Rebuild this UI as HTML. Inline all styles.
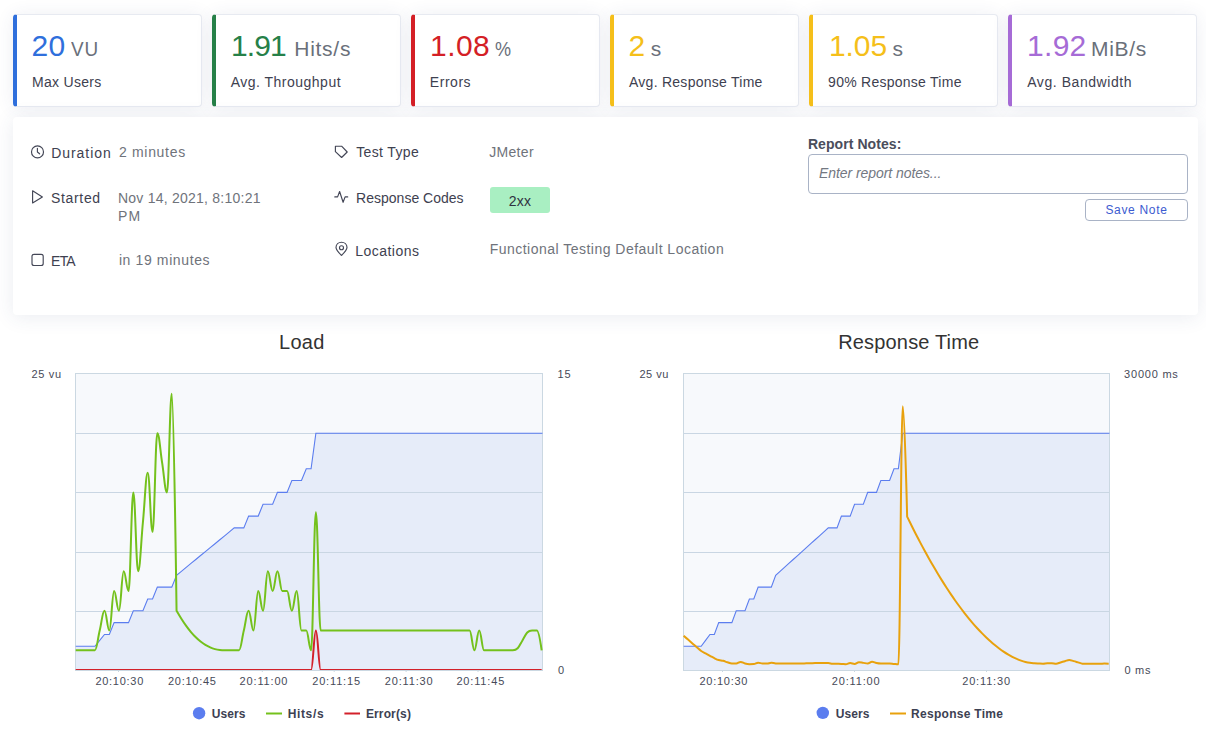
<!DOCTYPE html>
<html><head><meta charset="utf-8">
<style>
html,body{margin:0;padding:0;background:#fff;}
body{width:1206px;height:735px;overflow:hidden;position:relative;font-family:"Liberation Sans",sans-serif;}
.card{position:absolute;top:14px;height:93px;width:188.5px;box-sizing:border-box;background:#fff;border:1px solid #e7eaf1;border-left:4px solid #2f6fdc;border-radius:4px;box-shadow:0 1px 18px rgba(50,70,120,0.09);}
.t{position:absolute;white-space:nowrap;line-height:1;}
.val{font-size:30px;}
.unit{font-size:21px;color:#6a707a;letter-spacing:-1px;}
.lbl{font-size:14px;color:#3e4150;}
.panel{position:absolute;left:13px;top:117px;width:1185px;height:198px;background:#fff;border-radius:4px;box-shadow:0 2px 20px rgba(50,70,120,0.1);}
.dl{font-size:14px;color:#3e4150;}
.dv{font-size:14px;color:#6f737b;}
.ic{position:absolute;left:0;top:0;}
</style></head><body>
<!-- stat cards -->
<div class="card" style="left:13px;border-left-color:#2f6fdc"></div>
<div class="card" style="left:212px;border-left-color:#268048"></div>
<div class="card" style="left:411px;border-left-color:#d41f26"></div>
<div class="card" style="left:610px;border-left-color:#f5bf1a"></div>
<div class="card" style="left:809px;border-left-color:#f5bf1a"></div>
<div class="card" style="left:1008px;border-left-color:#a66bd6"></div>

<!-- details panel -->
<div class="panel"></div>
<svg class="ic" width="400" height="320" style="position:absolute;left:0;top:0" fill="none" stroke="#434656" stroke-width="1.15" stroke-linecap="round" stroke-linejoin="round">
  <circle cx="37.5" cy="151.9" r="6"/>
  <path d="M37.4 148.3 V152 L39.6 153.8"/>
  <path d="M32.6 190.8 L42.4 196.9 L32.6 203 Z"/>
  <rect x="32" y="254.3" width="11.2" height="11.2" rx="2"/>
  <path d="M335.4 146.2 H341.6 L347.2 152 L341.6 157.5 L335.4 151.7 Z"/>
  <path d="M334.8 196.9 H337.6 L339.6 191.5 L343.1 202.3 L345.1 196.9 H347.7"/>
  <path d="M341.5 255.4 C338.5 252.5 336 250 336 247.5 C336 244.2 338.5 242.2 341.5 242.2 C344.5 242.2 347 244.2 347 247.5 C347 250 344.5 252.5 341.5 255.4 Z"/>
  <circle cx="341.5" cy="247.7" r="2"/>
</svg>

<div style="position:absolute;left:490px;top:187px;width:60px;height:26px;background:#a9efc2;border-radius:3px;"></div>

<div style="position:absolute;left:808px;top:154px;width:380px;height:40px;box-sizing:border-box;border:1px solid #a9b3c6;border-radius:4px;background:#fff"></div>
<div style="position:absolute;left:1085px;top:199px;width:103px;height:22px;box-sizing:border-box;border:1px solid #a9b3c6;border-radius:4px;background:#fff"></div>

<svg width="1206" height="420" viewBox="0 315 1206 420" style="position:absolute;left:0;top:315px">
<rect x="75.5" y="373.5" width="467" height="297.0" fill="#f7f9fc"/>
<line x1="75.5" y1="433.50" x2="542.5" y2="433.50" stroke="#c9d6e3" stroke-width="1"/><line x1="75.5" y1="492.50" x2="542.5" y2="492.50" stroke="#c9d6e3" stroke-width="1"/><line x1="75.5" y1="552.50" x2="542.5" y2="552.50" stroke="#c9d6e3" stroke-width="1"/><line x1="75.5" y1="611.50" x2="542.5" y2="611.50" stroke="#c9d6e3" stroke-width="1"/>
<path d="M 75.68 646.32 L 80.48 646.32 L 85.29 646.32 L 90.09 646.32 L 94.90 646.32 L 99.70 640.40 L 104.50 634.48 L 109.31 634.48 L 114.11 622.64 L 118.92 622.64 L 123.72 622.64 L 128.52 622.64 L 133.33 610.80 L 138.13 610.80 L 142.94 610.80 L 147.74 598.96 L 152.54 598.96 L 157.35 587.12 L 162.15 587.12 L 166.96 587.12 L 171.76 587.12 L 176.56 575.28 L 181.37 571.33 L 186.17 567.39 L 190.98 563.44 L 195.78 559.49 L 200.58 555.55 L 205.39 551.60 L 210.19 547.65 L 215.00 543.71 L 219.80 539.76 L 224.60 535.81 L 229.41 531.87 L 234.21 527.92 L 239.02 527.92 L 243.82 527.92 L 248.62 516.08 L 253.43 516.08 L 258.23 516.08 L 263.04 504.24 L 267.84 504.24 L 272.64 504.24 L 277.45 492.40 L 282.25 492.40 L 287.06 492.40 L 291.86 480.56 L 296.66 480.56 L 301.47 480.56 L 306.27 468.72 L 311.08 468.72 L 315.88 433.20 L 320.68 433.20 L 325.49 433.20 L 330.29 433.20 L 335.10 433.20 L 339.90 433.20 L 344.70 433.20 L 349.51 433.20 L 354.31 433.20 L 359.12 433.20 L 363.92 433.20 L 368.72 433.20 L 373.53 433.20 L 378.33 433.20 L 383.14 433.20 L 387.94 433.20 L 392.74 433.20 L 397.55 433.20 L 402.35 433.20 L 407.16 433.20 L 411.96 433.20 L 416.76 433.20 L 421.57 433.20 L 426.37 433.20 L 431.18 433.20 L 435.98 433.20 L 440.78 433.20 L 445.59 433.20 L 450.39 433.20 L 455.20 433.20 L 460.00 433.20 L 464.80 433.20 L 469.61 433.20 L 474.41 433.20 L 479.22 433.20 L 484.02 433.20 L 488.82 433.20 L 493.63 433.20 L 498.43 433.20 L 503.24 433.20 L 508.04 433.20 L 512.84 433.20 L 517.65 433.20 L 522.45 433.20 L 527.26 433.20 L 532.06 433.20 L 536.86 433.20 L 542.50 433.20 L 542.50 670.00 L 75.68 670.00 Z" fill="#e6ecf9"/>
<line x1="75.5" y1="433.50" x2="542.5" y2="433.50" stroke="#c9d6e3" stroke-width="1"/><line x1="75.5" y1="492.50" x2="542.5" y2="492.50" stroke="#c9d6e3" stroke-width="1"/><line x1="75.5" y1="552.50" x2="542.5" y2="552.50" stroke="#c9d6e3" stroke-width="1"/><line x1="75.5" y1="611.50" x2="542.5" y2="611.50" stroke="#c9d6e3" stroke-width="1"/>
<rect x="75.5" y="373.5" width="467" height="297.0" fill="none" stroke="#cbd8e2" stroke-width="1"/>
<defs><clipPath id="cl"><rect x="75" y="373" width="468" height="297"/></clipPath><clipPath id="cr"><rect x="683" y="373" width="427" height="297"/></clipPath></defs>
<g clip-path="url(#cl)">
<path d="M 75.68 646.32 L 80.48 646.32 L 85.29 646.32 L 90.09 646.32 L 94.90 646.32 L 99.70 640.40 L 104.50 634.48 L 109.31 634.48 L 114.11 622.64 L 118.92 622.64 L 123.72 622.64 L 128.52 622.64 L 133.33 610.80 L 138.13 610.80 L 142.94 610.80 L 147.74 598.96 L 152.54 598.96 L 157.35 587.12 L 162.15 587.12 L 166.96 587.12 L 171.76 587.12 L 176.56 575.28 L 181.37 571.33 L 186.17 567.39 L 190.98 563.44 L 195.78 559.49 L 200.58 555.55 L 205.39 551.60 L 210.19 547.65 L 215.00 543.71 L 219.80 539.76 L 224.60 535.81 L 229.41 531.87 L 234.21 527.92 L 239.02 527.92 L 243.82 527.92 L 248.62 516.08 L 253.43 516.08 L 258.23 516.08 L 263.04 504.24 L 267.84 504.24 L 272.64 504.24 L 277.45 492.40 L 282.25 492.40 L 287.06 492.40 L 291.86 480.56 L 296.66 480.56 L 301.47 480.56 L 306.27 468.72 L 311.08 468.72 L 315.88 433.20 L 320.68 433.20 L 325.49 433.20 L 330.29 433.20 L 335.10 433.20 L 339.90 433.20 L 344.70 433.20 L 349.51 433.20 L 354.31 433.20 L 359.12 433.20 L 363.92 433.20 L 368.72 433.20 L 373.53 433.20 L 378.33 433.20 L 383.14 433.20 L 387.94 433.20 L 392.74 433.20 L 397.55 433.20 L 402.35 433.20 L 407.16 433.20 L 411.96 433.20 L 416.76 433.20 L 421.57 433.20 L 426.37 433.20 L 431.18 433.20 L 435.98 433.20 L 440.78 433.20 L 445.59 433.20 L 450.39 433.20 L 455.20 433.20 L 460.00 433.20 L 464.80 433.20 L 469.61 433.20 L 474.41 433.20 L 479.22 433.20 L 484.02 433.20 L 488.82 433.20 L 493.63 433.20 L 498.43 433.20 L 503.24 433.20 L 508.04 433.20 L 512.84 433.20 L 517.65 433.20 L 522.45 433.20 L 527.26 433.20 L 532.06 433.20 L 536.86 433.20 L 542.50 433.20" fill="none" stroke="#5b7def" stroke-width="1.1"/>
<path d="M 75.68 670.00 C 75.68 670.00 78.56 670.00 80.48 670.00 C 82.41 670.00 83.37 670.00 85.29 670.00 C 87.21 670.00 88.17 670.00 90.09 670.00 C 92.01 670.00 92.97 670.00 94.90 670.00 C 96.82 670.00 97.78 670.00 99.70 670.00 C 101.62 670.00 102.58 670.00 104.50 670.00 C 106.43 670.00 107.39 670.00 109.31 670.00 C 111.23 670.00 112.19 670.00 114.11 670.00 C 116.03 670.00 116.99 670.00 118.92 670.00 C 120.84 670.00 121.80 670.00 123.72 670.00 C 125.64 670.00 126.60 670.00 128.52 670.00 C 130.45 670.00 131.41 670.00 133.33 670.00 C 135.25 670.00 136.21 670.00 138.13 670.00 C 140.05 670.00 141.01 670.00 142.94 670.00 C 144.86 670.00 145.82 670.00 147.74 670.00 C 149.66 670.00 150.62 670.00 152.54 670.00 C 154.47 670.00 155.43 670.00 157.35 670.00 C 159.27 670.00 160.23 670.00 162.15 670.00 C 164.07 670.00 165.03 670.00 166.96 670.00 C 168.88 670.00 169.84 670.00 171.76 670.00 C 173.68 670.00 174.64 670.00 176.56 670.00 C 178.49 670.00 179.45 670.00 181.37 670.00 C 183.29 670.00 184.25 670.00 186.17 670.00 C 188.09 670.00 189.05 670.00 190.98 670.00 C 192.90 670.00 193.86 670.00 195.78 670.00 C 197.70 670.00 198.66 670.00 200.58 670.00 C 202.51 670.00 203.47 670.00 205.39 670.00 C 207.31 670.00 208.27 670.00 210.19 670.00 C 212.11 670.00 213.07 670.00 215.00 670.00 C 216.92 670.00 217.88 670.00 219.80 670.00 C 221.72 670.00 222.68 670.00 224.60 670.00 C 226.53 670.00 227.49 670.00 229.41 670.00 C 231.33 670.00 232.29 670.00 234.21 670.00 C 236.13 670.00 237.09 670.00 239.02 670.00 C 240.94 670.00 241.90 670.00 243.82 670.00 C 245.74 670.00 246.70 670.00 248.62 670.00 C 250.55 670.00 251.51 670.00 253.43 670.00 C 255.35 670.00 256.31 670.00 258.23 670.00 C 260.15 670.00 261.11 670.00 263.04 670.00 C 264.96 670.00 265.92 670.00 267.84 670.00 C 269.76 670.00 270.72 670.00 272.64 670.00 C 274.57 670.00 275.53 670.00 277.45 670.00 C 279.37 670.00 280.33 670.00 282.25 670.00 C 284.17 670.00 285.13 670.00 287.06 670.00 C 288.98 670.00 289.94 670.00 291.86 670.00 C 293.78 670.00 294.74 670.00 296.66 670.00 C 298.59 670.00 299.55 670.00 301.47 670.00 C 303.39 670.00 304.35 670.00 306.27 670.00 C 308.19 670.00 309.15 670.00 311.08 670.00 C 313.00 670.00 313.96 630.53 315.88 630.53 C 317.80 630.53 318.76 670.00 320.68 670.00 C 322.61 670.00 323.57 670.00 325.49 670.00 C 327.41 670.00 328.37 670.00 330.29 670.00 C 332.21 670.00 333.17 670.00 335.10 670.00 C 337.02 670.00 337.98 670.00 339.90 670.00 C 341.82 670.00 342.78 670.00 344.70 670.00 C 346.63 670.00 347.59 670.00 349.51 670.00 C 351.43 670.00 352.39 670.00 354.31 670.00 C 356.23 670.00 357.19 670.00 359.12 670.00 C 361.04 670.00 362.00 670.00 363.92 670.00 C 365.84 670.00 366.80 670.00 368.72 670.00 C 370.65 670.00 371.61 670.00 373.53 670.00 C 375.45 670.00 376.41 670.00 378.33 670.00 C 380.25 670.00 381.21 670.00 383.14 670.00 C 385.06 670.00 386.02 670.00 387.94 670.00 C 389.86 670.00 390.82 670.00 392.74 670.00 C 394.67 670.00 395.63 670.00 397.55 670.00 C 399.47 670.00 400.43 670.00 402.35 670.00 C 404.27 670.00 405.23 670.00 407.16 670.00 C 409.08 670.00 410.04 670.00 411.96 670.00 C 413.88 670.00 414.84 670.00 416.76 670.00 C 418.69 670.00 419.65 670.00 421.57 670.00 C 423.49 670.00 424.45 670.00 426.37 670.00 C 428.29 670.00 429.25 670.00 431.18 670.00 C 433.10 670.00 434.06 670.00 435.98 670.00 C 437.90 670.00 438.86 670.00 440.78 670.00 C 442.71 670.00 443.67 670.00 445.59 670.00 C 447.51 670.00 448.47 670.00 450.39 670.00 C 452.31 670.00 453.27 670.00 455.20 670.00 C 457.12 670.00 458.08 670.00 460.00 670.00 C 461.92 670.00 462.88 670.00 464.80 670.00 C 466.73 670.00 467.69 670.00 469.61 670.00 C 471.53 670.00 472.49 670.00 474.41 670.00 C 476.33 670.00 477.29 670.00 479.22 670.00 C 481.14 670.00 482.10 670.00 484.02 670.00 C 485.94 670.00 486.90 670.00 488.82 670.00 C 490.75 670.00 491.71 670.00 493.63 670.00 C 495.55 670.00 496.51 670.00 498.43 670.00 C 500.35 670.00 501.31 670.00 503.24 670.00 C 505.16 670.00 506.12 670.00 508.04 670.00 C 509.96 670.00 510.92 670.00 512.84 670.00 C 514.77 670.00 515.73 670.00 517.65 670.00 C 519.57 670.00 520.53 670.00 522.45 670.00 C 524.37 670.00 525.33 670.00 527.26 670.00 C 529.18 670.00 530.14 670.00 532.06 670.00 C 533.98 670.00 534.94 670.00 536.86 670.00 C 538.79 670.00 541.67 670.00 541.67 670.00" fill="none" stroke="#d3202a" stroke-width="2"/>
<path d="M 75.68 650.27 C 75.68 650.27 78.56 650.27 80.48 650.27 C 82.41 650.27 83.37 650.27 85.29 650.27 C 87.21 650.27 88.17 650.27 90.09 650.27 C 92.01 650.27 92.97 650.27 94.90 650.27 C 96.82 650.27 97.78 638.43 99.70 630.53 C 101.62 622.64 102.58 610.80 104.50 610.80 C 106.43 610.80 107.39 630.53 109.31 630.53 C 111.23 630.53 112.19 591.07 114.11 591.07 C 116.03 591.07 116.99 610.80 118.92 610.80 C 120.84 610.80 121.80 571.33 123.72 571.33 C 125.64 571.33 126.60 591.07 128.52 591.07 C 130.45 591.07 131.41 492.40 133.33 492.40 C 135.25 492.40 136.21 571.33 138.13 571.33 C 140.05 571.33 141.01 541.73 142.94 522.00 C 144.86 502.27 145.82 472.67 147.74 472.67 C 149.66 472.67 150.62 531.87 152.54 531.87 C 154.47 531.87 155.43 433.20 157.35 433.20 C 159.27 433.20 160.23 450.96 162.15 462.80 C 164.07 474.64 165.03 492.40 166.96 492.40 C 168.88 492.40 169.84 393.73 171.76 393.73 C 173.68 393.73 176.56 610.80 176.56 610.80 L 176.56 610.80 C 176.56 610.80 179.45 615.73 181.37 618.75 C 183.29 621.78 184.25 623.26 186.17 625.93 C 188.09 628.60 189.05 629.84 190.98 632.11 C 192.90 634.39 193.86 635.43 195.78 637.32 C 197.70 639.22 198.66 640.06 200.58 641.59 C 202.51 643.11 203.47 643.77 205.39 644.94 C 207.31 646.11 208.27 646.60 210.19 647.43 C 212.11 648.26 213.07 648.58 215.00 649.10 C 216.92 649.61 217.88 649.77 219.80 650.01 C 221.72 650.24 222.68 650.27 224.60 650.27 C 226.53 650.27 227.49 650.27 229.41 650.27 C 231.33 650.27 232.29 650.27 234.21 650.27 C 236.13 650.27 237.09 650.27 239.02 650.27 C 240.94 650.27 241.90 638.43 243.82 630.53 C 245.74 622.64 246.70 610.80 248.62 610.80 C 250.55 610.80 251.51 630.53 253.43 630.53 C 255.35 630.53 256.31 591.07 258.23 591.07 C 260.15 591.07 261.11 610.80 263.04 610.80 C 264.96 610.80 265.92 571.33 267.84 571.33 C 269.76 571.33 270.72 591.07 272.64 591.07 C 274.57 591.07 275.53 571.33 277.45 571.33 C 279.37 571.33 280.33 591.07 282.25 591.07 C 284.17 591.07 285.13 591.07 287.06 591.07 C 288.98 591.07 289.94 610.80 291.86 610.80 C 293.78 610.80 294.74 591.07 296.66 591.07 C 298.59 591.07 299.55 630.53 301.47 630.53 C 303.39 630.53 304.35 630.53 306.27 630.53 C 308.19 630.53 309.15 650.27 311.08 650.27 C 313.00 650.27 313.96 512.13 315.88 512.13 C 317.80 512.13 318.76 630.53 320.68 630.53 C 322.61 630.53 323.57 630.53 325.49 630.53 C 327.41 630.53 328.37 630.53 330.29 630.53 C 332.21 630.53 333.17 630.53 335.10 630.53 C 337.02 630.53 337.98 630.53 339.90 630.53 C 341.82 630.53 342.78 630.53 344.70 630.53 C 346.63 630.53 347.59 630.53 349.51 630.53 C 351.43 630.53 352.39 630.53 354.31 630.53 C 356.23 630.53 357.19 630.53 359.12 630.53 C 361.04 630.53 362.00 630.53 363.92 630.53 C 365.84 630.53 366.80 630.53 368.72 630.53 C 370.65 630.53 371.61 630.53 373.53 630.53 C 375.45 630.53 376.41 630.53 378.33 630.53 C 380.25 630.53 381.21 630.53 383.14 630.53 C 385.06 630.53 386.02 630.53 387.94 630.53 C 389.86 630.53 390.82 630.53 392.74 630.53 C 394.67 630.53 395.63 630.53 397.55 630.53 C 399.47 630.53 400.43 630.53 402.35 630.53 C 404.27 630.53 405.23 630.53 407.16 630.53 C 409.08 630.53 410.04 630.53 411.96 630.53 C 413.88 630.53 414.84 630.53 416.76 630.53 C 418.69 630.53 419.65 630.53 421.57 630.53 C 423.49 630.53 424.45 630.53 426.37 630.53 C 428.29 630.53 429.25 630.53 431.18 630.53 C 433.10 630.53 434.06 630.53 435.98 630.53 C 437.90 630.53 438.86 630.53 440.78 630.53 C 442.71 630.53 443.67 630.53 445.59 630.53 C 447.51 630.53 448.47 630.53 450.39 630.53 C 452.31 630.53 453.27 630.53 455.20 630.53 C 457.12 630.53 458.08 630.53 460.00 630.53 C 461.92 630.53 462.88 630.53 464.80 630.53 C 466.73 630.53 467.69 630.53 469.61 630.53 C 471.53 630.53 472.49 650.27 474.41 650.27 C 476.33 650.27 477.29 630.53 479.22 630.53 C 481.14 630.53 482.10 650.27 484.02 650.27 C 485.94 650.27 486.90 650.27 488.82 650.27 C 490.75 650.27 491.71 650.27 493.63 650.27 C 495.55 650.27 496.51 650.27 498.43 650.27 C 500.35 650.27 501.31 650.27 503.24 650.27 C 505.16 650.27 506.12 650.27 508.04 650.27 C 509.96 650.27 510.92 650.27 512.84 650.27 C 514.77 650.27 515.73 650.27 517.65 648.29 C 519.57 646.32 520.53 643.56 522.45 640.40 C 524.37 637.24 525.33 634.48 527.26 632.51 C 529.18 630.53 530.14 630.53 532.06 630.53 C 533.98 630.53 534.94 630.53 536.86 630.53 C 538.79 630.53 541.67 650.27 541.67 650.27" fill="none" stroke="#74c11c" stroke-width="2" stroke-linejoin="round"/>
</g>
<line x1="118.5" y1="670.5" x2="118.5" y2="672.0" stroke="#cbd8e2" stroke-width="1"/><line x1="190.4" y1="670.5" x2="190.4" y2="672.0" stroke="#cbd8e2" stroke-width="1"/><line x1="262.3" y1="670.5" x2="262.3" y2="672.0" stroke="#cbd8e2" stroke-width="1"/><line x1="334.2" y1="670.5" x2="334.2" y2="672.0" stroke="#cbd8e2" stroke-width="1"/><line x1="406.1" y1="670.5" x2="406.1" y2="672.0" stroke="#cbd8e2" stroke-width="1"/><line x1="478.0" y1="670.5" x2="478.0" y2="672.0" stroke="#cbd8e2" stroke-width="1"/>
<rect x="683.5" y="373.5" width="426" height="297.0" fill="#f7f9fc"/>
<line x1="683.5" y1="433.50" x2="1109.5" y2="433.50" stroke="#c9d6e3" stroke-width="1"/><line x1="683.5" y1="492.50" x2="1109.5" y2="492.50" stroke="#c9d6e3" stroke-width="1"/><line x1="683.5" y1="552.50" x2="1109.5" y2="552.50" stroke="#c9d6e3" stroke-width="1"/><line x1="683.5" y1="611.50" x2="1109.5" y2="611.50" stroke="#c9d6e3" stroke-width="1"/>
<path d="M 683.66 646.32 L 688.04 646.32 L 692.42 646.32 L 696.81 646.32 L 701.19 646.32 L 705.57 640.40 L 709.95 634.48 L 714.33 634.48 L 718.72 622.64 L 723.10 622.64 L 727.48 622.64 L 731.86 622.64 L 736.24 610.80 L 740.63 610.80 L 745.01 610.80 L 749.39 598.96 L 753.77 598.96 L 758.15 587.12 L 762.54 587.12 L 766.92 587.12 L 771.30 587.12 L 775.68 575.28 L 780.06 571.33 L 784.45 567.39 L 788.83 563.44 L 793.21 559.49 L 797.59 555.55 L 801.97 551.60 L 806.36 547.65 L 810.74 543.71 L 815.12 539.76 L 819.50 535.81 L 823.88 531.87 L 828.27 527.92 L 832.65 527.92 L 837.03 527.92 L 841.41 516.08 L 845.79 516.08 L 850.18 516.08 L 854.56 504.24 L 858.94 504.24 L 863.32 504.24 L 867.70 492.40 L 872.09 492.40 L 876.47 492.40 L 880.85 480.56 L 885.23 480.56 L 889.61 480.56 L 894.00 468.72 L 898.38 468.72 L 902.76 433.20 L 907.14 433.20 L 911.52 433.20 L 915.91 433.20 L 920.29 433.20 L 924.67 433.20 L 929.05 433.20 L 933.43 433.20 L 937.82 433.20 L 942.20 433.20 L 946.58 433.20 L 950.96 433.20 L 955.34 433.20 L 959.73 433.20 L 964.11 433.20 L 968.49 433.20 L 972.87 433.20 L 977.25 433.20 L 981.64 433.20 L 986.02 433.20 L 990.40 433.20 L 994.78 433.20 L 999.16 433.20 L 1003.55 433.20 L 1007.93 433.20 L 1012.31 433.20 L 1016.69 433.20 L 1021.07 433.20 L 1025.46 433.20 L 1029.84 433.20 L 1034.22 433.20 L 1038.60 433.20 L 1042.98 433.20 L 1047.37 433.20 L 1051.75 433.20 L 1056.13 433.20 L 1060.51 433.20 L 1064.89 433.20 L 1069.28 433.20 L 1073.66 433.20 L 1078.04 433.20 L 1082.42 433.20 L 1086.80 433.20 L 1091.19 433.20 L 1095.57 433.20 L 1099.95 433.20 L 1104.33 433.20 L 1109.50 433.20 L 1109.50 670.00 L 683.66 670.00 Z" fill="#e6ecf9"/>
<line x1="683.5" y1="433.50" x2="1109.5" y2="433.50" stroke="#c9d6e3" stroke-width="1"/><line x1="683.5" y1="492.50" x2="1109.5" y2="492.50" stroke="#c9d6e3" stroke-width="1"/><line x1="683.5" y1="552.50" x2="1109.5" y2="552.50" stroke="#c9d6e3" stroke-width="1"/><line x1="683.5" y1="611.50" x2="1109.5" y2="611.50" stroke="#c9d6e3" stroke-width="1"/>
<rect x="683.5" y="373.5" width="426" height="297.0" fill="none" stroke="#cbd8e2" stroke-width="1"/>
<g clip-path="url(#cr)">
<path d="M 683.66 646.32 L 688.04 646.32 L 692.42 646.32 L 696.81 646.32 L 701.19 646.32 L 705.57 640.40 L 709.95 634.48 L 714.33 634.48 L 718.72 622.64 L 723.10 622.64 L 727.48 622.64 L 731.86 622.64 L 736.24 610.80 L 740.63 610.80 L 745.01 610.80 L 749.39 598.96 L 753.77 598.96 L 758.15 587.12 L 762.54 587.12 L 766.92 587.12 L 771.30 587.12 L 775.68 575.28 L 780.06 571.33 L 784.45 567.39 L 788.83 563.44 L 793.21 559.49 L 797.59 555.55 L 801.97 551.60 L 806.36 547.65 L 810.74 543.71 L 815.12 539.76 L 819.50 535.81 L 823.88 531.87 L 828.27 527.92 L 832.65 527.92 L 837.03 527.92 L 841.41 516.08 L 845.79 516.08 L 850.18 516.08 L 854.56 504.24 L 858.94 504.24 L 863.32 504.24 L 867.70 492.40 L 872.09 492.40 L 876.47 492.40 L 880.85 480.56 L 885.23 480.56 L 889.61 480.56 L 894.00 468.72 L 898.38 468.72 L 902.76 433.20 L 907.14 433.20 L 911.52 433.20 L 915.91 433.20 L 920.29 433.20 L 924.67 433.20 L 929.05 433.20 L 933.43 433.20 L 937.82 433.20 L 942.20 433.20 L 946.58 433.20 L 950.96 433.20 L 955.34 433.20 L 959.73 433.20 L 964.11 433.20 L 968.49 433.20 L 972.87 433.20 L 977.25 433.20 L 981.64 433.20 L 986.02 433.20 L 990.40 433.20 L 994.78 433.20 L 999.16 433.20 L 1003.55 433.20 L 1007.93 433.20 L 1012.31 433.20 L 1016.69 433.20 L 1021.07 433.20 L 1025.46 433.20 L 1029.84 433.20 L 1034.22 433.20 L 1038.60 433.20 L 1042.98 433.20 L 1047.37 433.20 L 1051.75 433.20 L 1056.13 433.20 L 1060.51 433.20 L 1064.89 433.20 L 1069.28 433.20 L 1073.66 433.20 L 1078.04 433.20 L 1082.42 433.20 L 1086.80 433.20 L 1091.19 433.20 L 1095.57 433.20 L 1099.95 433.20 L 1104.33 433.20 L 1109.50 433.20" fill="none" stroke="#5b7def" stroke-width="1.1"/>
<path d="M 683.66 635.80 C 683.66 635.80 686.29 638.08 688.04 639.61 C 689.79 641.13 690.67 641.91 692.42 643.45 C 694.18 644.98 695.05 645.78 696.81 647.29 C 698.56 648.79 699.44 649.75 701.19 650.97 C 702.94 652.18 703.82 652.41 705.57 653.37 C 707.32 654.33 708.20 654.81 709.95 655.77 C 711.70 656.73 712.58 657.32 714.33 658.17 C 716.09 659.03 716.96 659.52 718.72 660.04 C 720.47 660.57 721.35 660.35 723.10 660.80 C 724.85 661.25 725.73 661.77 727.48 662.29 C 729.23 662.81 730.11 663.40 731.86 663.40 C 733.61 663.40 734.49 663.40 736.24 663.40 C 738.00 663.40 738.87 661.91 740.63 661.91 C 742.38 661.91 743.26 663.05 745.01 663.50 C 746.76 663.96 747.64 664.19 749.39 664.19 C 751.14 664.19 752.02 664.19 753.77 664.04 C 755.52 663.89 756.40 662.79 758.15 662.79 C 759.91 662.79 760.78 663.41 762.54 663.51 C 764.29 663.62 765.17 663.62 766.92 663.62 C 768.67 663.62 769.55 662.76 771.30 662.76 C 773.05 662.76 773.93 663.37 775.68 663.44 C 777.43 663.52 778.31 663.50 780.06 663.52 C 781.82 663.54 782.69 663.53 784.45 663.54 C 786.20 663.55 787.08 663.55 788.83 663.56 C 790.58 663.57 791.46 663.58 793.21 663.58 C 794.96 663.58 795.84 663.58 797.59 663.58 C 799.34 663.58 800.22 663.51 801.97 663.46 C 803.73 663.41 804.60 663.39 806.36 663.34 C 808.11 663.29 808.99 663.27 810.74 663.22 C 812.49 663.17 813.37 663.10 815.12 663.10 C 816.87 663.10 817.75 663.10 819.50 663.10 C 821.25 663.10 822.13 663.10 823.88 663.10 C 825.64 663.10 826.51 663.10 828.27 663.10 C 830.02 663.10 830.90 663.61 832.65 663.71 C 834.40 663.82 835.28 663.78 837.03 663.82 C 838.78 663.86 839.66 663.83 841.41 663.92 C 843.16 664.00 844.04 664.24 845.79 664.24 C 847.55 664.24 848.42 663.00 850.18 663.00 C 851.93 663.00 852.81 663.89 854.56 663.89 C 856.31 663.89 857.19 662.25 858.94 662.25 C 860.69 662.25 861.57 662.63 863.32 662.87 C 865.07 663.10 865.95 663.43 867.70 663.43 C 869.46 663.43 870.33 661.76 872.09 661.76 C 873.84 661.76 874.72 662.68 876.47 663.04 C 878.22 663.40 879.10 663.55 880.85 663.55 C 882.60 663.55 883.48 663.51 885.23 663.48 C 886.98 663.45 887.86 663.41 889.61 663.41 C 891.37 663.41 892.24 663.74 894.00 663.91 C 895.75 664.09 896.63 664.30 898.38 664.30 C 900.13 664.30 901.01 406.20 902.76 406.20 C 904.51 406.20 907.14 516.59 907.14 516.59 L 907.14 516.59 C 907.14 516.59 909.77 522.00 911.52 525.52 C 913.28 529.04 914.15 530.78 915.91 534.20 C 917.66 537.62 918.54 539.30 920.29 542.62 C 922.04 545.94 922.92 547.57 924.67 550.79 C 926.42 554.01 927.30 555.59 929.05 558.71 C 930.80 561.82 931.68 563.35 933.43 566.36 C 935.19 569.37 936.06 570.85 937.82 573.76 C 939.57 576.67 940.45 578.10 942.20 580.90 C 943.95 583.70 944.83 585.07 946.58 587.77 C 948.33 590.46 949.21 591.78 950.96 594.37 C 952.71 596.96 953.59 598.23 955.34 600.71 C 957.10 603.19 957.97 604.40 959.73 606.77 C 961.48 609.14 962.36 610.29 964.11 612.55 C 965.86 614.81 966.74 615.91 968.49 618.06 C 970.24 620.20 971.12 621.25 972.87 623.28 C 974.62 625.31 975.50 626.30 977.25 628.22 C 979.01 630.13 979.88 631.06 981.64 632.86 C 983.39 634.66 984.27 635.53 986.02 637.21 C 987.77 638.89 988.65 639.71 990.40 641.26 C 992.15 642.82 993.03 643.57 994.78 645.01 C 996.53 646.44 997.41 647.13 999.16 648.44 C 1000.92 649.74 1001.79 650.37 1003.55 651.55 C 1005.30 652.73 1006.18 653.28 1007.93 654.33 C 1009.68 655.37 1010.56 655.86 1012.31 656.77 C 1014.06 657.68 1014.94 658.10 1016.69 658.86 C 1018.44 659.63 1019.32 659.98 1021.07 660.59 C 1022.83 661.20 1023.70 661.47 1025.46 661.93 C 1027.21 662.38 1028.09 662.57 1029.84 662.85 C 1031.59 663.12 1032.47 663.15 1034.22 663.28 C 1035.97 663.42 1036.85 663.44 1038.60 663.51 C 1040.35 663.57 1041.23 663.63 1042.98 663.63 C 1044.74 663.63 1045.61 663.32 1047.37 663.30 C 1049.12 663.27 1050.00 663.27 1051.75 663.27 C 1053.50 663.27 1054.38 663.66 1056.13 663.66 C 1057.88 663.66 1058.76 662.92 1060.51 662.43 C 1062.26 661.94 1063.14 661.69 1064.89 661.20 C 1066.65 660.70 1067.52 659.96 1069.28 659.96 C 1071.03 659.96 1071.91 660.62 1073.66 661.10 C 1075.41 661.58 1076.29 661.86 1078.04 662.37 C 1079.79 662.87 1080.67 663.47 1082.42 663.63 C 1084.17 663.80 1085.05 663.80 1086.80 663.80 C 1088.56 663.80 1089.43 663.80 1091.19 663.80 C 1092.94 663.80 1093.82 663.80 1095.57 663.80 C 1097.32 663.80 1098.20 663.80 1099.95 663.80 C 1101.70 663.80 1102.58 663.51 1104.33 663.51 C 1106.08 663.51 1108.71 663.64 1108.71 663.64" fill="none" stroke="#e8a10d" stroke-width="2" stroke-linejoin="round"/>
</g>
<line x1="722.5" y1="670.5" x2="722.5" y2="672.0" stroke="#cbd8e2" stroke-width="1"/><line x1="854.5" y1="670.5" x2="854.5" y2="672.0" stroke="#cbd8e2" stroke-width="1"/><line x1="986.5" y1="670.5" x2="986.5" y2="672.0" stroke="#cbd8e2" stroke-width="1"/>
<circle cx="199.1" cy="713.2" r="6.2" fill="#5b7def"/>
<line x1="266" y1="713.5" x2="282" y2="713.5" stroke="#74c11c" stroke-width="2"/>
<line x1="344.4" y1="713.5" x2="360" y2="713.5" stroke="#d3202a" stroke-width="2"/>
<circle cx="822.8" cy="712.9" r="6.2" fill="#5b7def"/>
<line x1="890" y1="713.5" x2="906" y2="713.5" stroke="#e8a10d" stroke-width="2"/>
</svg>
<div class="t" style="left:31.50px;top:31.00px;font-size:30px;color:#2f6fdc;letter-spacing:0.43px">20</div>
<div class="t" style="left:70.70px;top:38.00px;font-size:21px;color:#6a707a;letter-spacing:1.00px;transform:scaleX(0.900);transform-origin:0 0">VU</div>
<div class="t" style="left:32.10px;top:74.90px;font-size:14px;color:#3e4150;letter-spacing:0.29px">Max Users</div>
<div class="t" style="left:231.10px;top:31.00px;font-size:30px;color:#268048;letter-spacing:-0.93px">1.91</div>
<div class="t" style="left:294.30px;top:38.00px;font-size:21px;color:#6a707a;letter-spacing:0.72px">Hits/s</div>
<div class="t" style="left:230.70px;top:74.90px;font-size:14px;color:#3e4150;letter-spacing:0.49px">Avg. Throughput</div>
<div class="t" style="left:430.10px;top:31.00px;font-size:30px;color:#d41f26;letter-spacing:0.40px">1.08</div>
<div class="t" style="left:494.60px;top:38.00px;font-size:21px;color:#6a707a;letter-spacing:0.00px;transform:scaleX(0.860);transform-origin:0 0">%</div>
<div class="t" style="left:429.80px;top:74.90px;font-size:14px;color:#3e4150;letter-spacing:0.54px">Errors</div>
<div class="t" style="left:628.50px;top:31.00px;font-size:30px;color:#f5bf1a;letter-spacing:0.42px">2</div>
<div class="t" style="left:650.70px;top:38.00px;font-size:21px;color:#6a707a;letter-spacing:0.10px">s</div>
<div class="t" style="left:629.00px;top:74.90px;font-size:14px;color:#3e4150;letter-spacing:0.26px">Avg. Response Time</div>
<div class="t" style="left:828.90px;top:31.00px;font-size:30px;color:#f5bf1a;letter-spacing:-0.07px">1.05</div>
<div class="t" style="left:892.50px;top:38.00px;font-size:21px;color:#6a707a;letter-spacing:-0.10px">s</div>
<div class="t" style="left:828.10px;top:74.90px;font-size:14px;color:#3e4150;letter-spacing:0.26px">90% Response Time</div>
<div class="t" style="left:1027.10px;top:31.00px;font-size:30px;color:#a66bd6;letter-spacing:0.27px">1.92</div>
<div class="t" style="left:1091.00px;top:38.00px;font-size:21px;color:#6a707a;letter-spacing:0.71px">MiB/s</div>
<div class="t" style="left:1027.20px;top:74.90px;font-size:14px;color:#3e4150;letter-spacing:0.56px">Avg. Bandwidth</div>
<div class="t" style="left:51.20px;top:145.80px;font-size:14px;color:#3e4150;letter-spacing:0.95px">Duration</div>
<div class="t" style="left:118.90px;top:145.00px;font-size:14px;color:#6f737b;letter-spacing:0.70px">2 minutes</div>
<div class="t" style="left:51.10px;top:191.00px;font-size:14px;color:#3e4150;letter-spacing:0.65px">Started</div>
<div class="t" style="left:117.90px;top:190.60px;font-size:14px;color:#6f737b;letter-spacing:0.24px">Nov 14, 2021, 8:10:21</div>
<div class="t" style="left:117.90px;top:209.40px;font-size:14px;color:#6f737b;letter-spacing:1.20px">PM</div>
<div class="t" style="left:51.10px;top:253.60px;font-size:14px;color:#3e4150;letter-spacing:-0.79px">ETA</div>
<div class="t" style="left:118.90px;top:252.80px;font-size:14px;color:#6f737b;letter-spacing:0.62px">in 19 minutes</div>
<div class="t" style="left:356.20px;top:145.40px;font-size:14px;color:#3e4150;letter-spacing:0.36px">Test Type</div>
<div class="t" style="left:489.20px;top:144.90px;font-size:14px;color:#6f737b;letter-spacing:0.32px">JMeter</div>
<div class="t" style="left:356.10px;top:190.90px;font-size:14px;color:#3e4150;letter-spacing:0.01px">Response Codes</div>
<div class="t" style="left:508.70px;top:194.20px;font-size:14px;color:#2f3240;letter-spacing:0.26px">2xx</div>
<div class="t" style="left:355.20px;top:243.50px;font-size:14px;color:#3e4150;letter-spacing:0.48px">Locations</div>
<div class="t" style="left:489.70px;top:242.30px;font-size:14px;color:#6f737b;letter-spacing:0.48px">Functional Testing Default Location</div>
<div class="t" style="left:807.90px;top:136.60px;font-size:14px;color:#4a4d5b;letter-spacing:0.07px;font-weight:bold">Report Notes:</div>
<div class="t" style="left:818.90px;top:166.40px;font-size:14px;color:#737882;letter-spacing:-0.06px;font-style:italic">Enter report notes...</div>
<div class="t" style="left:1105.40px;top:203.60px;font-size:12px;color:#3c5bd0;letter-spacing:0.68px">Save Note</div>
<div class="t" style="left:279.00px;top:331.90px;font-size:20px;color:#333333;letter-spacing:0.27px">Load</div>
<div class="t" style="left:838.20px;top:332.10px;font-size:20px;color:#333333;letter-spacing:0.17px">Response Time</div>
<div class="t" style="left:31.40px;top:368.90px;font-size:11px;color:#474a58;letter-spacing:0.73px">25 vu</div>
<div class="t" style="left:557.50px;top:368.90px;font-size:11px;color:#474a58;letter-spacing:0.96px">15</div>
<div class="t" style="left:558.00px;top:664.90px;font-size:11px;color:#474a58;letter-spacing:0.48px">0</div>
<div class="t" style="left:639.40px;top:368.90px;font-size:11px;color:#474a58;letter-spacing:0.50px">25 vu</div>
<div class="t" style="left:1124.10px;top:368.90px;font-size:11px;color:#474a58;letter-spacing:0.78px">30000 ms</div>
<div class="t" style="left:1124.50px;top:664.90px;font-size:11px;color:#474a58;letter-spacing:0.69px">0 ms</div>
<div class="t" style="left:95.40px;top:676.00px;font-size:11px;color:#474a58;letter-spacing:0.72px">20:10:30</div>
<div class="t" style="left:168.00px;top:676.00px;font-size:11px;color:#474a58;letter-spacing:0.73px">20:10:45</div>
<div class="t" style="left:239.60px;top:676.00px;font-size:11px;color:#474a58;letter-spacing:0.84px">20:11:00</div>
<div class="t" style="left:312.20px;top:676.00px;font-size:11px;color:#474a58;letter-spacing:0.84px">20:11:15</div>
<div class="t" style="left:384.80px;top:676.00px;font-size:11px;color:#474a58;letter-spacing:0.84px">20:11:30</div>
<div class="t" style="left:456.40px;top:676.00px;font-size:11px;color:#474a58;letter-spacing:0.84px">20:11:45</div>
<div class="t" style="left:699.50px;top:676.00px;font-size:11px;color:#474a58;letter-spacing:0.72px">20:10:30</div>
<div class="t" style="left:831.80px;top:676.00px;font-size:11px;color:#474a58;letter-spacing:0.84px">20:11:00</div>
<div class="t" style="left:962.20px;top:676.00px;font-size:11px;color:#474a58;letter-spacing:0.84px">20:11:30</div>
<div class="t" style="left:211.80px;top:707.80px;font-size:12px;color:#3d4152;letter-spacing:0.06px;font-weight:bold">Users</div>
<div class="t" style="left:287.70px;top:707.80px;font-size:12px;color:#3d4152;letter-spacing:0.64px;font-weight:bold">Hits/s</div>
<div class="t" style="left:365.90px;top:707.80px;font-size:12px;color:#3d4152;letter-spacing:0.14px;font-weight:bold">Error(s)</div>
<div class="t" style="left:835.80px;top:707.80px;font-size:12px;color:#3d4152;letter-spacing:0.06px;font-weight:bold">Users</div>
<div class="t" style="left:911.10px;top:707.80px;font-size:12px;color:#3d4152;letter-spacing:0.28px;font-weight:bold">Response Time</div>
</body></html>
